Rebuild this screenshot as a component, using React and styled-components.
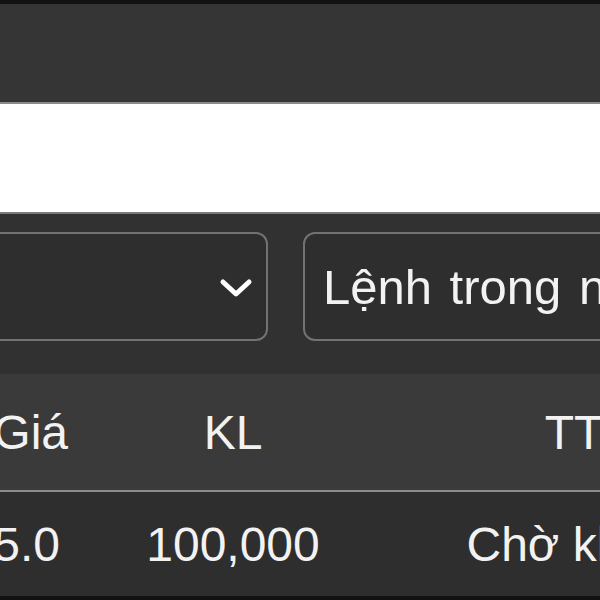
import React from 'react';
import styled, { createGlobalStyle } from 'styled-components';

const GlobalStyle = createGlobalStyle`
  html, body {
    margin: 0;
    padding: 0;
    background: #2f2f2f;
  }
  body {
    font-family: "Liberation Sans", Arial, sans-serif;
  }
`;

const Page = styled.div`
  width: 600px;
  height: 600px;
  overflow: hidden;
  background: #2f2f2f;
`;

const TopBar = styled.div`
  height: 98px;
  background: #353535;
  border-top: 4px solid #121212;
  border-bottom: 2px solid #8a8a8a;
`;

const Banner = styled.div`
  height: 108px;
  background: #ffffff;
  border-bottom: 2px solid #7a7a7a;
`;

const FilterBar = styled.div`
  display: flex;
  gap: 35px;
  padding: 18px 0 33px;
  margin-left: -30px;
  background: #313131;
`;

const Select = styled.div`
  flex: 0 0 ${(p) => p.width}px;
  box-sizing: border-box;
  height: 109px;
  border: 2px solid #727272;
  border-radius: 12px;
  background: #2e2e2e;
  display: flex;
  align-items: center;
  justify-content: ${(p) => (p.right ? 'flex-end' : 'flex-start')};
  padding: 0 12px 0 18px;
  color: #f2f2f2;
  font-size: 49px;
  word-spacing: 4px;
  white-space: nowrap;
  overflow: hidden;
`;

const Chevron = styled.svg`
  width: 36px;
  height: 20px;
  margin-top: 2px;
`;

const Row = styled.div`
  display: grid;
  grid-template-columns: 128px 330px 352px;
  align-items: center;
  margin-left: -60px;
  height: ${(p) => p.height}px;
  background: ${(p) => p.bg};
  border-bottom: ${(p) => p.border};
  color: #f2f2f2;
  font-size: 48px;
  white-space: nowrap;
`;

const Cell = styled.div`
  text-align: ${(p) => p.align || 'center'};
  padding-right: ${(p) => p.pad || 0}px;
`;

export default function App() {
  return (
    <Page>
      <GlobalStyle />
      <TopBar />
      <Banner />
      <FilterBar>
        <Select width={298} right>
          <Chevron viewBox="0 0 36 20">
            <polyline
              points="5,4 18,16 31,4"
              fill="none"
              stroke="#ffffff"
              strokeWidth="5"
              strokeLinecap="round"
              strokeLinejoin="round"
            />
          </Chevron>
        </Select>
        <Select width={340}>Lệnh trong ngày</Select>
      </FilterBar>
      <Row height={116} bg="#3a3a3a" border="2px solid #8c8c8c">
        <Cell align="right">Giá</Cell>
        <Cell>KL</Cell>
        <Cell>TT</Cell>
      </Row>
      <Row height={104} bg="#2e2e2e" border="4px solid #121212">
        <Cell align="right" pad={8}>5.0</Cell>
        <Cell>100,000</Cell>
        <Cell>Chờ khớp</Cell>
      </Row>
    </Page>
  );
}
